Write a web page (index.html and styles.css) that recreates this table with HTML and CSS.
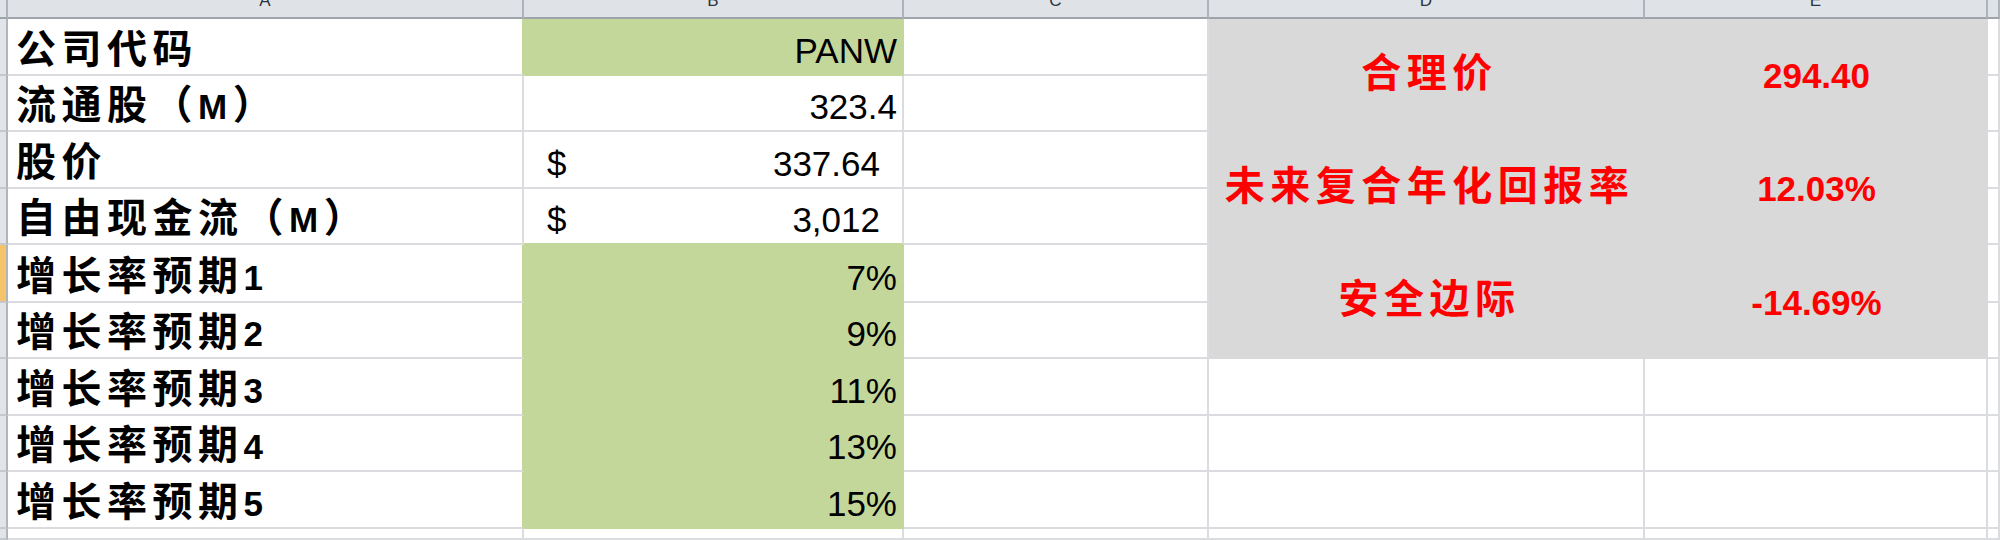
FILE: index.html
```html
<!DOCTYPE html>
<html lang="zh-CN">
<head>
<meta charset="utf-8">
<title>PANW 估值</title>
<link rel="stylesheet" href="styles.css">
</head>
<body>
<div class="sheet">
  <div class="h"></div>
  <div class="h"><span>A</span></div>
  <div class="h"><span>B</span></div>
  <div class="h"><span>C</span></div>
  <div class="h"><span>D</span></div>
  <div class="h"><span>E</span></div>
  <div class="h"></div>

  <div class="rh"></div>
  <div class="c lbl tg"><span class="t"><span class="zh">公司代码</span></span></div>
  <div class="c num g"><span class="t">PANW</span></div>
  <div class="c"></div>
  <div class="m zhc"><span class="t zh">合理价</span></div>
  <div class="m"><span class="t">294.40</span></div>
  <div class="c"></div>

  <div class="rh"></div>
  <div class="c lbl"><span class="t"><span class="zh">流通股（</span>M<span class="zh">）</span></span></div>
  <div class="c num"><span class="t">323.4</span></div>
  <div class="c"></div>
  <div class="c"></div>

  <div class="rh"></div>
  <div class="c lbl"><span class="t"><span class="zh">股价</span></span></div>
  <div class="c acct"><span class="t">$</span><span class="t">337.64</span></div>
  <div class="c"></div>
  <div class="m zhc"><span class="t zh">未来复合年化回报率</span></div>
  <div class="m"><span class="t">12.03%</span></div>
  <div class="c"></div>

  <div class="rh"></div>
  <div class="c lbl"><span class="t"><span class="zh">自由现金流（</span>M<span class="zh">）</span></span></div>
  <div class="c acct bg"><span class="t">$</span><span class="t">3,012</span></div>
  <div class="c"></div>
  <div class="c"></div>

  <div class="rh sel"></div>
  <div class="c lbl tg"><span class="t"><span class="zh">增长率预期</span>1</span></div>
  <div class="c num g"><span class="t">7%</span></div>
  <div class="c"></div>
  <div class="m zhc"><span class="t zh">安全边际</span></div>
  <div class="m"><span class="t">-14.69%</span></div>
  <div class="c"></div>

  <div class="rh"></div>
  <div class="c lbl tg"><span class="t"><span class="zh">增长率预期</span>2</span></div>
  <div class="c num g"><span class="t">9%</span></div>
  <div class="c"></div>
  <div class="c"></div>

  <div class="rh"></div>
  <div class="c lbl tg"><span class="t"><span class="zh">增长率预期</span>3</span></div>
  <div class="c num g"><span class="t">11%</span></div>
  <div class="c"></div>
  <div class="c"></div>
  <div class="c"></div>
  <div class="c"></div>

  <div class="rh"></div>
  <div class="c lbl tg"><span class="t"><span class="zh">增长率预期</span>4</span></div>
  <div class="c num g"><span class="t">13%</span></div>
  <div class="c"></div>
  <div class="c"></div>
  <div class="c"></div>
  <div class="c"></div>

  <div class="rh"></div>
  <div class="c lbl tg"><span class="t"><span class="zh">增长率预期</span>5</span></div>
  <div class="c num g"><span class="t">15%</span></div>
  <div class="c"></div>
  <div class="c"></div>
  <div class="c"></div>
  <div class="c"></div>

  <div class="rh"></div>
  <div class="c"></div>
  <div class="c"></div>
  <div class="c"></div>
  <div class="c"></div>
  <div class="c"></div>
  <div class="c"></div>
</div>
</body>
</html>
```
FILE: styles.css
```css
html, body {
  margin: 0;
  padding: 0;
  background: #ffffff;
}

body {
  width: 2000px;
  height: 540px;
  overflow: hidden;
  font-family: "Liberation Sans", "Noto Sans CJK SC", sans-serif;
}

.sheet {
  display: grid;
  grid-template-columns: 8px 516px 380px 305px 436px 343px 12px;
  grid-template-rows: 19px 57px 56px 57px 56px 58px 56px 57px 56px 57px 11px;
  height: 540px;
  overflow: hidden;
}

/* column headers (scrolled so only the foot of the letters shows) */
.h {
  box-sizing: border-box;
  background: #dfe3e8;
  border-right: 2px solid #aeb3b9;
  border-bottom: 2px solid #9fa4aa;
  overflow: hidden;
  text-align: center;
  font-size: 17px;
  line-height: 18px;
  color: #2b3440;
}

.h span {
  display: block;
  margin-top: -8px;
}

/* row header strip */
.rh {
  box-sizing: border-box;
  background: #e1e4e8;
  border-right: 2px solid #b0b5ba;
  border-bottom: 2px solid #c5c9ce;
}

.rh.sel {
  background: #f4c36c;
}

/* ordinary cells */
.c {
  box-sizing: border-box;
  display: flex;
  align-items: flex-end;
  border-right: 2px solid #dadcdf;
  border-bottom: 2px solid #dadcdf;
  padding-bottom: 6px;
  font-size: 35px;
  line-height: 35px;
  color: #000000;
  white-space: nowrap;
}

.zh {
  font-family: "Noto Sans CJK SC", sans-serif;
  font-size: 40px;
}

.lbl {
  padding-left: 8px;
  font-weight: 700;
  letter-spacing: 5.5px;
}

.num {
  justify-content: flex-end;
  padding-right: 5px;
}

.acct {
  justify-content: space-between;
  padding-left: 23px;
  padding-right: 22px;
}

.g {
  background: #c4d79b;
  border-right-color: #c4d79b;
  border-bottom-color: #c4d79b;
}

.tg {
  border-right-color: #c4d79b;
}

.bg {
  border-bottom-color: #c4d79b;
}

/* merged result block */
.m {
  grid-row: span 2;
  box-sizing: border-box;
  display: flex;
  align-items: center;
  justify-content: center;
  background: #d9d9d9;
  color: #ff0000;
  font-weight: 700;
  font-size: 35px;
  line-height: 35px;
  white-space: nowrap;
}

.m.zhc {
  padding-left: 5px;
  padding-bottom: 11px;
}

.m .zh {
  letter-spacing: 5.5px;
}
```
